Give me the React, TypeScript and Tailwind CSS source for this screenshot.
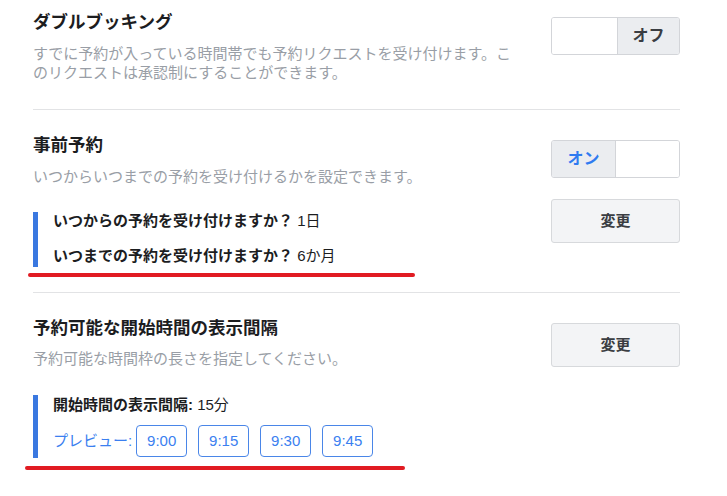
import React from 'react';

const font = { fontFamily: '"Liberation Sans", "Noto Sans CJK JP", sans-serif' };

function Toggle({ on }: { on: boolean }) {
  return (
    <div className="flex h-[38px] w-[129px] overflow-hidden rounded-[3px] border border-[#d3d5d9]">
      {on ? (
        <>
          <div className="flex w-[64px] items-center justify-center border-r border-[#d3d5d9] bg-[#ebedf0] text-[16px] font-bold text-[#2f7bf0]">
            オン
          </div>
          <div className="flex-1 bg-white" />
        </>
      ) : (
        <>
          <div className="w-[66px] border-r border-[#d3d5d9] bg-white" />
          <div className="flex flex-1 items-center justify-center bg-[#ebedf0] text-[16px] font-bold text-[#3a3d42]">
            オフ
          </div>
        </>
      )}
    </div>
  );
}

function ChangeButton() {
  return (
    <button className="flex h-[44px] w-[129px] items-center justify-center rounded-[3px] border border-[#d7d9dc] bg-[#f3f4f6] text-[15px] font-bold text-[#3a3d42]">
      変更
    </button>
  );
}

export default function App() {
  return (
    <div className="min-h-screen bg-white" style={font}>
      <div className="ml-[33px] w-[647px]">
        {/* ダブルブッキング */}
        <section className="flex justify-between pt-[10px] pb-[27px] border-b border-[#e2e3e5]">
          <div className="w-[485px]">
            <h2 className="text-[17.5px] font-bold leading-[24px] text-[#1c1d1f]">ダブルブッキング</h2>
            <p className="mt-[10px] text-[15px] leading-[19px] text-[#999ea6]">
              すでに予約が入っている時間帯でも予約リクエストを受け付けます。このリクエストは承認制にすることができます。
            </p>
          </div>
          <div className="mt-[7px]">
            <Toggle on={false} />
          </div>
        </section>

        {/* 事前予約 */}
        <section className="flex justify-between pt-[23px] pb-[15px] border-b border-[#e2e3e5]">
          <div className="w-[485px]">
            <h2 className="text-[17.5px] font-bold leading-[24px] text-[#1c1d1f]">事前予約</h2>
            <p className="mt-[10px] text-[15px] leading-[19px] text-[#999ea6]">
              いつからいつまでの予約を受け付けるかを設定できます。
            </p>
            <div className="mt-[26px] border-l-[5px] border-[#3a78e0] pl-[15px] pb-[2px]">
              <div className="text-[15px] leading-[18px] text-[#1c1d1f]">
                <span className="font-bold">いつからの予約を受け付けますか？</span> 1日
              </div>
              <div className="mt-[17px] text-[15px] leading-[18px] text-[#1c1d1f]">
                <span className="font-bold">いつまでの予約を受け付けますか？</span> 6か月
              </div>
            </div>
            <div className="mt-[6px] -ml-[5px] h-[4px] w-[387px] rounded-full bg-[#e11b22]" />
          </div>
          <div className="mt-[7px] flex flex-col gap-[21px]">
            <Toggle on={true} />
            <ChangeButton />
          </div>
        </section>

        {/* 予約可能な開始時間の表示間隔 */}
        <section className="flex justify-between pt-[23px] pb-[20px]">
          <div className="w-[485px]">
            <h2 className="text-[17.5px] font-bold leading-[24px] text-[#1c1d1f]">予約可能な開始時間の表示間隔</h2>
            <p className="mt-[9px] text-[15px] leading-[19px] text-[#999ea6]">
              予約可能な時間枠の長さを指定してください。
            </p>
            <div className="mt-[27px] border-l-[5px] border-[#3a78e0] pl-[15px] pb-[1px]">
              <div className="text-[15px] leading-[20px] text-[#1c1d1f]">
                <span className="font-bold">開始時間の表示間隔:</span> 15分
              </div>
              <div className="mt-[10px] flex items-center">
                <span className="mr-[4px] text-[15px] text-[#3b7ff0]">プレビュー:</span>
                <div className="flex gap-[11px]">
                  {['9:00', '9:15', '9:30', '9:45'].map((t) => (
                    <div
                      key={t}
                      className="flex h-[32px] w-[51px] items-center justify-center rounded-[4px] border border-[#4a86e8] text-[15px] text-[#3b7ff0]"
                    >
                      {t}
                    </div>
                  ))}
                </div>
              </div>
            </div>
            <div className="mt-[8px] -ml-[8px] h-[4px] w-[380px] rounded-full bg-[#e11b22]" />
          </div>
          <div className="mt-[7px]">
            <ChangeButton />
          </div>
        </section>
      </div>
    </div>
  );
}
